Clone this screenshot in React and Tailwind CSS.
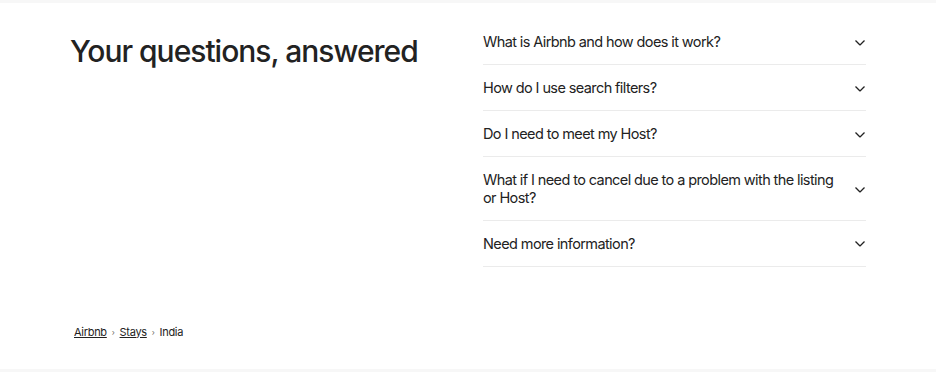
import React from 'react';

const questions = [
  'What is Airbnb and how does it work?',
  'How do I use search filters?',
  'Do I need to meet my Host?',
  'What if I need to cancel due to a problem with the listing or Host?',
  'Need more information?',
];

const Chevron = () => (
  <svg viewBox="0 0 32 32" className="w-3 h-3 shrink-0" fill="none" stroke="#222222" strokeWidth="3.5">
    <path d="M28 12 16.7 23.3a1 1 0 0 1-1.4 0L4 12" />
  </svg>
);

const App = () => {
  return (
    <div
      className="w-[936px] h-[372px] bg-white text-[#222222] flex flex-col"
      style={{ fontFamily: 'Inter, "Noto Sans", sans-serif' }}
    >
      <div className="h-[3px] bg-[#f7f7f7]" />
      <div className="flex-1 px-[70px] flex flex-col">
        <div className="grid grid-cols-2 gap-[30px] pt-[16px]">
          <h2 className="text-[30px] font-medium tracking-[-1px] leading-[34px] pt-[15px]">
            Your questions, answered
          </h2>
          <div>
            {questions.map((q) => (
              <button
                key={q}
                className="w-full flex items-center justify-between gap-3 pt-[14px] pb-[13.5px] border-b border-[#ebebeb] text-left"
              >
                <span className="text-[14.5px] tracking-[-0.6px] leading-[17.5px]">{q}</span>
                <Chevron />
              </button>
            ))}
          </div>
        </div>
        <div className="mt-auto pb-[29px] pl-1 flex items-center gap-[5px] text-[11px] tracking-[-0.3px]">
          <a href="#" className="underline">Airbnb</a>
          <span className="text-[8px] text-[#6a6a6a]">›</span>
          <a href="#" className="underline">Stays</a>
          <span className="text-[8px] text-[#6a6a6a]">›</span>
          <span>India</span>
        </div>
      </div>
      <div className="h-[3px] bg-[#f7f7f7]" />
    </div>
  );
};

export default App;
